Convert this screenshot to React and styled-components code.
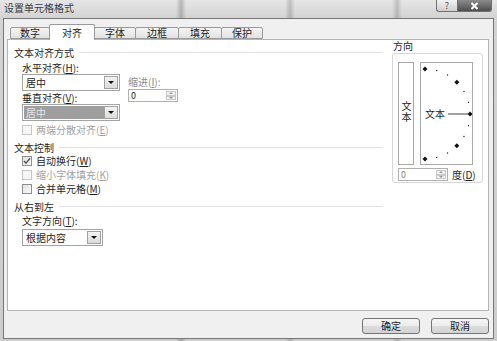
import React from 'react';
import styled, { createGlobalStyle, css } from 'styled-components';

const GlobalStyle = createGlobalStyle`
  html, body { margin: 0; padding: 0; background: #d4d4d4; }
  body {
    font-family: "Noto Sans CJK SC", "Liberation Sans", sans-serif;
    font-size: 10px;
    color: #1e1e1e;
  }
  * { box-sizing: border-box; }
`;

const Window = styled.div`
  width: 497px;
  height: 341px;
  display: flex;
  flex-direction: column;
  background:
    linear-gradient(90deg, transparent 176px, rgba(0,0,0,.2) 181px, transparent 186px,
      transparent 285px, rgba(0,0,0,.16) 290px, transparent 295px,
      transparent 392px, rgba(0,0,0,.16) 397px, transparent 402px),
    linear-gradient(180deg, #e6e6e6 0, #d3d3d3 18px, #cdcdcd 100%);
`;

const TitleBar = styled.div`
  height: 18px;
  display: flex;
  justify-content: space-between;
  align-items: flex-start;
  padding-left: 4px;
`;

const Title = styled.span`
  line-height: 16px;
  color: #3c3c3c;
`;

const Controls = styled.div`
  display: flex;
  margin-right: 5px;
`;

const CaptionButton = styled.div`
  height: 12px;
  display: flex;
  align-items: center;
  justify-content: center;
  border: 1px solid #6f6f6f;
  border-top: none;
  ${p => p.$close ? css`
    width: 35px;
    border-radius: 0 0 3px 0;
    background: linear-gradient(180deg, #8c8c8c, #4e4e4e);
  ` : css`
    width: 21px;
    border-right: none;
    border-radius: 0 0 0 3px;
    background: linear-gradient(180deg, #f2f2f2, #cfcfcf);
    color: #555;
    font-size: 9px;
    line-height: 10px;
  `}
`;

const Client = styled.div`
  flex: 1;
  margin: 0 3px 2px 3px;
  border: 1px solid #777;
  background: #f0f0f0;
  display: flex;
  flex-direction: column;
`;

const TabStrip = styled.div`
  height: 20px;
  display: flex;
  align-items: flex-end;
  padding-left: 6px;
`;

const Tab = styled.div`
  width: ${p => p.$w}px;
  height: ${p => p.$active ? 16 : 12}px;
  margin-left: -1px;
  margin-bottom: ${p => p.$active ? -1 : 0}px;
  position: relative;
  z-index: ${p => p.$active ? 2 : 1};
  border: 1px solid #9a9a9a;
  border-bottom: ${p => p.$active ? 'none' : '1px solid #9a9a9a'};
  border-radius: 2px 2px 0 0;
  background: ${p => p.$active ? '#fff' : 'linear-gradient(180deg, #f4f4f4, #e2e2e2)'};
  display: flex;
  justify-content: center;
  align-items: ${p => p.$active ? 'flex-start' : 'center'};
  line-height: ${p => p.$active ? 16 : 10}px;
  &:first-child { margin-left: 0; }
`;

const Panel = styled.div`
  height: 272px;
  margin: 0 4px 0 3px;
  border: 1px solid #b5b5b5;
  background: #fff;
  display: flex;
`;

const Main = styled.div`
  flex: 1;
  padding: 6px 0 0 6px;
  display: flex;
  flex-direction: column;
`;

const SectionHeader = styled.div`
  height: 13px;
  line-height: 13px;
  margin-top: ${p => p.$mt || 0}px;
  display: flex;
  align-items: center;
  gap: 5px;
  &::after {
    content: "";
    flex: 1;
    height: 1px;
    background: #e3e3e3;
  }
`;

const Indent = styled.div`
  padding-left: 8px;
  display: flex;
  flex-direction: ${p => p.$row ? 'row' : 'column'};
  gap: ${p => p.$row ? 8 : 0}px;
`;

const Column = styled.div`
  display: flex;
  flex-direction: column;
  padding-top: ${p => p.$pt || 0}px;
`;

const Label = styled.div`
  height: 13px;
  line-height: 13px;
  margin-top: ${p => p.$mt || 0}px;
  color: ${p => p.$disabled ? '#8c8c8c' : 'inherit'};
  white-space: nowrap;
`;

const Hotkey = styled.u`
  text-underline-offset: 1px;
`;

const Select = styled.div`
  width: ${p => p.$w}px;
  height: 17px;
  margin-top: ${p => p.$mt || 0}px;
  border: 1px solid #a3a3a3;
  background: #fff;
  display: flex;
  padding: 1px;
`;

const SelectValue = styled.div`
  flex: 1;
  line-height: 13px;
  padding-left: 2px;
  ${p => p.$highlight && css`
    background: #9e9e9e;
    color: #e4e4e4;
  `}
`;

const DropButton = styled.div`
  width: 14px;
  border: 1px solid #a0a0a0;
  background: linear-gradient(180deg, #f3f3f3, #dcdcdc);
  display: flex;
  align-items: center;
  justify-content: center;
  &::before {
    content: "";
    border-left: 3px solid transparent;
    border-right: 3px solid transparent;
    border-top: 3px solid #111;
  }
`;

const Spin = styled.div`
  width: 50px;
  height: 13px;
  flex: none;
  margin-top: ${p => p.$mt || 0}px;
  border: 1px solid #b0b0b0;
  background: #fff;
  display: flex;
`;

const SpinValue = styled.div`
  flex: 1;
  font-size: 9px;
  line-height: 11px;
  padding-left: 2px;
  color: ${p => p.$dim ? '#8a8a8a' : 'inherit'};
`;

const SpinButtons = styled.div`
  width: 10px;
  margin: 1px;
  display: flex;
  flex-direction: column;
`;

const SpinArrow = styled.div`
  flex: 1;
  border: 1px solid #c8c8c8;
  background: #f2f2f2;
  display: flex;
  align-items: center;
  justify-content: center;
  &::before {
    content: "";
    border-left: 2px solid transparent;
    border-right: 2px solid transparent;
    ${p => p.$up ? 'border-bottom: 2px solid #999;' : 'border-top: 2px solid #999;'}
  }
`;

const CheckRow = styled.div`
  height: 13px;
  margin-top: ${p => p.$mt || 0}px;
  display: flex;
  align-items: center;
  gap: 4px;
  white-space: nowrap;
  color: ${p => p.$disabled ? '#a2a2a2' : 'inherit'};
`;

const Box = styled.div`
  width: 10px;
  height: 10px;
  border: 1px solid ${p => p.$disabled ? '#c6c6c6' : '#8f8f8f'};
  background: ${p => p.$disabled ? '#f6f6f6' : 'linear-gradient(135deg, #e2e2e2, #fafafa)'};
  display: flex;
  align-items: center;
  justify-content: center;
`;

const Orientation = styled.div`
  width: 91px;
  margin: 0 5px 0 9px;
  display: flex;
  flex-direction: column;
`;

const GroupLabel = styled.div`
  height: 12px;
  line-height: 12px;
  padding-left: 1px;
`;

const Group = styled.div`
  margin-top: 1px;
  height: 130px;
  border: 1px solid #d6d6d6;
  border-radius: 3px;
  padding: 8px 2px 0 5px;
  display: flex;
  flex-direction: column;
`;

const DialRow = styled.div`
  display: flex;
  gap: 6px;
`;

const VerticalBox = styled.div`
  width: 16px;
  height: 103px;
  border: 1px solid #a8a8a8;
  display: flex;
  align-items: center;
  justify-content: center;
  padding-bottom: 4px;
`;

const VerticalText = styled.span`
  writing-mode: vertical-rl;
  text-orientation: upright;
  line-height: 12px;
  letter-spacing: 1px;
`;

const Dial = styled.div`
  width: 53px;
  height: 103px;
  border: 1px solid #a8a8a8;
  svg { display: block; }
`;

const DegreeRow = styled.div`
  margin-top: 2px;
  display: flex;
  align-items: center;
  gap: 4px;
  white-space: nowrap;
`;

const Footer = styled.div`
  display: flex;
  justify-content: flex-end;
  gap: 11px;
  padding: 7px 4px 0 0;
`;

const Button = styled.div`
  width: 58px;
  height: 16px;
  border: 1px solid #767676;
  border-radius: 3px;
  background: linear-gradient(180deg, #f4f4f4 0, #ececec 50%, #dcdcdc 51%, #d3d3d3 100%);
  display: flex;
  align-items: center;
  justify-content: center;
  line-height: 14px;
`;

const tabs = [
  ['数字', 40], ['对齐', 46], ['字体', 42], ['边框', 44], ['填充', 44], ['保护', 42],
];

const DialSvg = () => {
  const cx = 4, cy = 51, r = 45;
  const marks = [];
  for (let a = -90; a <= 90; a += 15) {
    const rad = (a * Math.PI) / 180;
    const x = cx + r * Math.cos(rad);
    const y = cy + r * Math.sin(rad);
    if (a % 45 === 0) {
      marks.push(
        <polygon key={a} points={`${x},${y - 2.5} ${x + 2.5},${y} ${x},${y + 2.5} ${x - 2.5},${y}`} fill="#111" />
      );
    } else {
      marks.push(<rect key={a} x={x - 0.6} y={y - 0.6} width="1.2" height="1.2" fill="#222" />);
    }
  }
  return (
    <svg width="51" height="101" viewBox="0 0 51 101">
      {marks}
      <line x1="27" y1="51" x2="48" y2="51" stroke="#444" strokeWidth="1" />
      <text x="4" y="55" fontSize="10" fill="#1e1e1e" fontFamily='"Noto Sans CJK SC", sans-serif'>文本</text>
    </svg>
  );
};

const Check = () => (
  <svg width="8" height="8" viewBox="0 0 8 8">
    <path d="M1 4 L3 6.2 L7 1.2" stroke="#555" strokeWidth="1.4" fill="none" />
  </svg>
);

const CloseIcon = () => (
  <svg width="9" height="8" viewBox="0 0 9 8">
    <path d="M1.5 1 L7.5 7 M7.5 1 L1.5 7" stroke="#fff" strokeWidth="2" />
  </svg>
);

const Checkbox = ({ checked, disabled, mt, children }) => (
  <CheckRow $mt={mt} $disabled={disabled}>
    <Box $disabled={disabled}>{checked && <Check />}</Box>
    <span>{children}</span>
  </CheckRow>
);

export default function App() {
  return (
    <>
      <GlobalStyle />
      <Window>
        <TitleBar>
          <Title>设置单元格格式</Title>
          <Controls>
            <CaptionButton>?</CaptionButton>
            <CaptionButton $close><CloseIcon /></CaptionButton>
          </Controls>
        </TitleBar>
        <Client>
          <TabStrip>
            {tabs.map(([name, w]) => (
              <Tab key={name} $w={w} $active={name === '对齐'}>{name}</Tab>
            ))}
          </TabStrip>
          <Panel>
            <Main>
              <SectionHeader>文本对齐方式</SectionHeader>
              <Indent $row>
                <Column>
                  <Label $mt={2}>水平对齐(<Hotkey>H</Hotkey>):</Label>
                  <Select $w={98}>
                    <SelectValue>居中</SelectValue>
                    <DropButton />
                  </Select>
                  <Label>垂直对齐(<Hotkey>V</Hotkey>):</Label>
                  <Select $w={98}>
                    <SelectValue $highlight>居中</SelectValue>
                    <DropButton />
                  </Select>
                </Column>
                <Column $pt={16}>
                  <Label $disabled>缩进(<Hotkey>I</Hotkey>):</Label>
                  <Spin $mt={1}>
                    <SpinValue>0</SpinValue>
                    <SpinButtons><SpinArrow $up /><SpinArrow /></SpinButtons>
                  </Spin>
                </Column>
              </Indent>
              <Indent>
                <Checkbox mt={2} disabled>两端分散对齐(<Hotkey>E</Hotkey>)</Checkbox>
              </Indent>
              <SectionHeader $mt={5}>文本控制</SectionHeader>
              <Indent>
                <Checkbox checked>自动换行(<Hotkey>W</Hotkey>)</Checkbox>
                <Checkbox mt={1} disabled>缩小字体填充(<Hotkey>K</Hotkey>)</Checkbox>
                <Checkbox mt={1}>合并单元格(<Hotkey>M</Hotkey>)</Checkbox>
              </Indent>
              <SectionHeader $mt={5}>从右到左</SectionHeader>
              <Indent>
                <Label $mt={1}>文字方向(<Hotkey>T</Hotkey>):</Label>
                <Select $w={81} $mt={2}>
                  <SelectValue>根据内容</SelectValue>
                  <DropButton />
                </Select>
              </Indent>
            </Main>
            <Orientation>
              <GroupLabel>方向</GroupLabel>
              <Group>
                <DialRow>
                  <VerticalBox><VerticalText>文本</VerticalText></VerticalBox>
                  <Dial><DialSvg /></Dial>
                </DialRow>
                <DegreeRow>
                  <Spin>
                    <SpinValue $dim>0</SpinValue>
                    <SpinButtons><SpinArrow $up /><SpinArrow /></SpinButtons>
                  </Spin>
                  <span>度(<Hotkey>D</Hotkey>)</span>
                </DegreeRow>
              </Group>
            </Orientation>
          </Panel>
          <Footer>
            <Button>确定</Button>
            <Button>取消</Button>
          </Footer>
        </Client>
      </Window>
    </>
  );
}
